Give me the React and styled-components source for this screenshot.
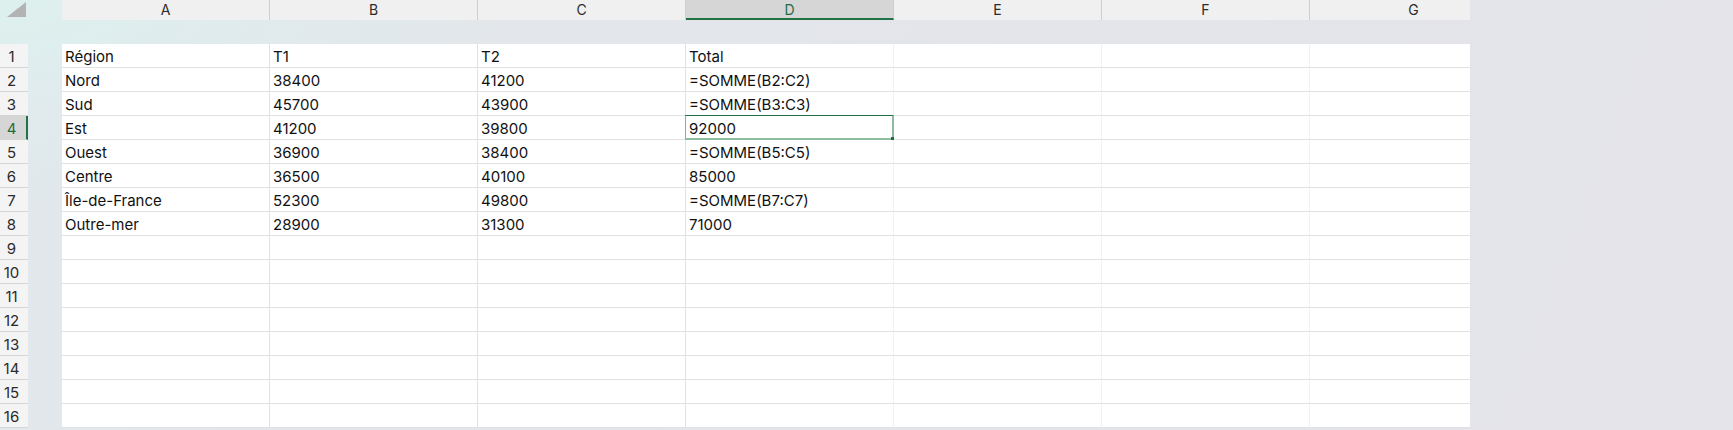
import React from "react";
import styled, { createGlobalStyle, css } from "styled-components";

const GlobalStyle = createGlobalStyle`
  html, body {
    margin: 0;
    padding: 0;
  }
  body {
    width: 1733px;
    height: 430px;
    overflow: hidden;
    font-family: Inter, "Liberation Sans", Arial, sans-serif;
    background:
      radial-gradient(ellipse 520px 220px at 0 0, #ddf0ee 0%, rgba(224, 236, 238, 0.6) 55%, rgba(227, 229, 234, 0) 100%),
      linear-gradient(110deg, #e2e8ec 0%, #e3e5ea 50%, #e4e4ea 100%);
  }
`;

const Sheet = styled.div`
  width: 1470px;
  overflow: hidden;
  display: flex;
  flex-direction: column;
`;

const HeaderRow = styled.div`
  display: flex;
  height: 20px;
  flex-shrink: 0;
`;

const Corner = styled.div`
  width: 28px;
  height: 20px;
  flex-shrink: 0;
  display: flex;
  align-items: flex-start;
  justify-content: flex-start;
`;

const Spacer = styled.div`
  width: 34px;
  flex-shrink: 0;
`;

const ColHeader = styled.div`
  width: 208px;
  flex-shrink: 0;
  box-sizing: border-box;
  height: 20px;
  background: #f0f0f0;
  border-right: 1px solid #cfcfcf;
  display: flex;
  align-items: center;
  justify-content: center;
  font-size: 14px;
  color: #2b2b2b;
  padding-bottom: 1px;
  ${(p) =>
    p.$active &&
    css`
      background: #d6d6d6;
      color: #1e6e42;
      border-bottom: 2px solid #217346;
      padding-bottom: 0;
    `}
`;

const Band = styled.div`
  height: 24px;
  flex-shrink: 0;
`;

const Row = styled.div`
  display: flex;
  height: 24px;
  flex-shrink: 0;
`;

const RowHeader = styled.div`
  width: 28px;
  flex-shrink: 0;
  box-sizing: border-box;
  height: 24px;
  background: #f4f4f4;
  border-bottom: 1px solid #d6d6d6;
  display: flex;
  align-items: center;
  justify-content: center;
  padding: 1px 5px 0 0;
  font-size: 15px;
  color: #2b2b2b;
  ${(p) =>
    p.$active &&
    css`
      background: #d6d6d6;
      color: #1e6e42;
      border-right: 2px solid #217346;
      padding-right: 3px;
    `}
`;

const Cell = styled.div`
  position: relative;
  width: 208px;
  flex-shrink: 0;
  box-sizing: border-box;
  height: 24px;
  background: #ffffff;
  border-bottom: 1px solid #e1e1e1;
  border-right: 1px solid ${(p) => (p.$faint ? "#f1f1f1" : "#e2e2e2")};
  padding: 2px 0 0 3px;
  font-size: 15px;
  line-height: 22px;
  color: #111111;
  white-space: nowrap;
  overflow: visible;
`;

const Selection = styled.span`
  position: absolute;
  top: -1px;
  left: -1px;
  right: -1px;
  bottom: -1px;
  border-top: 1px solid #1e6e42;
  border-left: 1px solid #7fb394;
  border-right: 2px solid #8dbea1;
  border-bottom: 2px solid #8dbea1;
  pointer-events: none;
`;

const Handle = styled.span`
  position: absolute;
  right: -3px;
  bottom: -3px;
  width: 4px;
  height: 4px;
  background: #1e6e42;
`;

const COLS = ["A", "B", "C", "D", "E", "F", "G"];

const DATA = [
  ["Région", "T1", "T2", "Total"],
  ["Nord", "38400", "41200", "=SOMME(B2:C2)"],
  ["Sud", "45700", "43900", "=SOMME(B3:C3)"],
  ["Est", "41200", "39800", "92000"],
  ["Ouest", "36900", "38400", "=SOMME(B5:C5)"],
  ["Centre", "36500", "40100", "85000"],
  ["Île-de-France", "52300", "49800", "=SOMME(B7:C7)"],
  ["Outre-mer", "28900", "31300", "71000"],
];

const ACTIVE = { row: 4, col: 3 };

const CornerMark = () => (
  <svg width="28" height="20" viewBox="0 0 28 20">
    <polygon points="7,17 26,17 26,2" fill="#b3b3b3" />
  </svg>
);

const App = () => {
  const rows = Array.from({ length: 16 }, (_, i) => i + 1);

  return (
    <>
      <GlobalStyle />
      <Sheet>
        <HeaderRow>
          <Corner>
            <CornerMark />
          </Corner>
          <Spacer />
          {COLS.map((c, i) => (
            <ColHeader key={c} $active={i === ACTIVE.col}>
              {c}
            </ColHeader>
          ))}
        </HeaderRow>
        <Band />
        {rows.map((r) => {
          const values = DATA[r - 1] || [];
          return (
            <Row key={r}>
              <RowHeader $active={r === ACTIVE.row}>{r}</RowHeader>
              <Spacer />
              {COLS.map((c, i) => {
                const selected = r === ACTIVE.row && i === ACTIVE.col;
                return (
                  <Cell key={c} $faint={i >= 3}>
                    {values[i] || ""}
                    {selected ? (
                      <Selection>
                        <Handle />
                      </Selection>
                    ) : null}
                  </Cell>
                );
              })}
            </Row>
          );
        })}
      </Sheet>
    </>
  );
};

export default App;
